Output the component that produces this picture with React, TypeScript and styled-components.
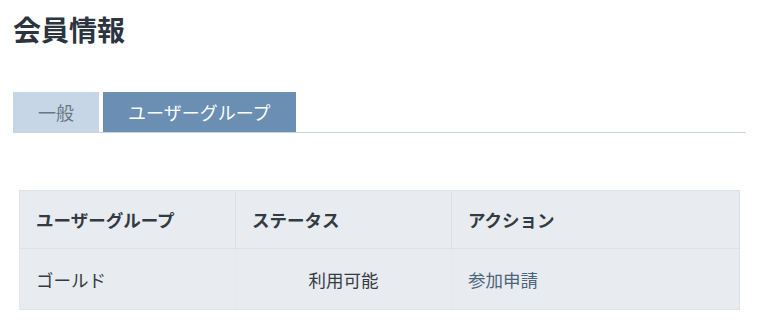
import styled, { createGlobalStyle } from "styled-components";

const GlobalStyle = createGlobalStyle`
	body {
		margin: 0;
		background: #ffffff;
		font-family: "Noto Sans CJK JP", "Noto Sans", sans-serif;
	}
`

const Page = styled.div`
	padding: 11px 14px 0 13px;
`

const Title = styled.h1`
	margin: 0;
	font-size: 28px;
	line-height: 36px;
	font-weight: 700;
	color: #2c3440;
`

const TabBar = styled.div`
	display: flex;
	gap: 4px;
	margin-top: 45px;
	border-bottom: 1px solid #c9d4df;
`

const Tab = styled.div<{ $active?: boolean }>`
	height: 40px;
	padding: 0 25px;
	display: flex;
	align-items: center;
	font-size: 18px;
	color: ${(p) => (p.$active ? "#ffffff" : "#6b7683")};
	background: ${(p) => (p.$active ? "#6b8eb3" : "#c6d6e6")};
`

const Table = styled.table`
	margin: 57px 0 0 6px;
	width: 721px;
	border-collapse: collapse;
	background: #e8ebf0;
	border: 1px solid #dfe3e8;
	font-size: 17.5px;
`

const Th = styled.th`
	height: 57px;
	padding: 0 16px;
	text-align: left;
	font-weight: 700;
	color: #333a42;
	border: 1px solid #dde1e6;
`

const Td = styled.td<{ $center?: boolean; $link?: boolean }>`
	height: 60px;
	padding: 0 16px;
	text-align: ${(p) => (p.$center ? "center" : "left")};
	color: ${(p) => (p.$link ? "#4a6579" : "#363b42")};
	border-top: 1px solid #dde1e6;
	border-left: 1px solid #e4e7ec;
`

export default function App() {
	return (
		<Page>
			<GlobalStyle />
			<Title>会員情報</Title>
			<TabBar>
				<Tab>一般</Tab>
				<Tab $active>ユーザーグループ</Tab>
			</TabBar>
			<Table>
				<thead>
					<tr>
						<Th style={{ width: 183 }}>ユーザーグループ</Th>
						<Th style={{ width: 183 }}>ステータス</Th>
						<Th>アクション</Th>
					</tr>
				</thead>
				<tbody>
					<tr>
						<Td>ゴールド</Td>
						<Td $center>利用可能</Td>
						<Td $link>参加申請</Td>
					</tr>
				</tbody>
			</Table>
		</Page>
	);
}
